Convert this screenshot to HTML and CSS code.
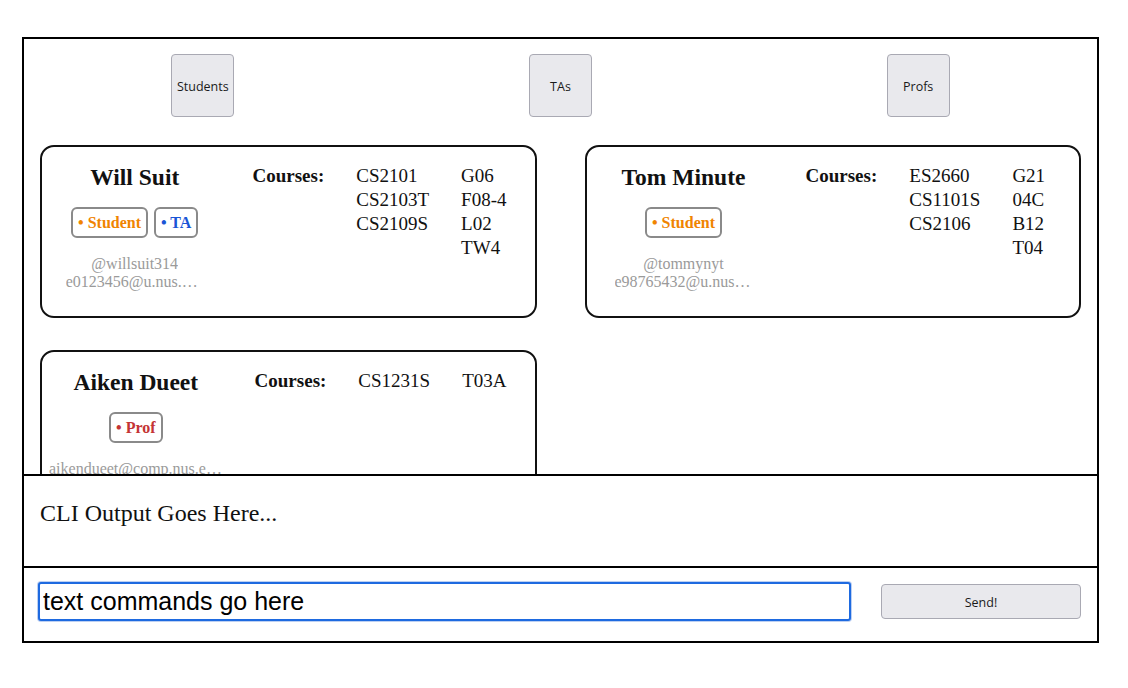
FILE: index.html
```html
<!DOCTYPE html>
<html lang="en">

<head>
    <meta charset="UTF-8">
    <meta name="viewport" content="width=device-width, initial-scale=1.0">
    <title>Contacts</title>
    <link rel="stylesheet" href="styles.css">
</head>

<body>
    <div class="app">
        <!-- filter buttons -->
        <div class="tabs">
            <div class="tab-cell"><button class="tab-btn">Students</button></div>
            <div class="tab-cell"><button class="tab-btn">TAs</button></div>
            <div class="tab-cell"><button class="tab-btn">Profs</button></div>
        </div>

        <!-- person cards -->
        <div class="card-list">
            <div class="card">
                <div class="person">
                    <div class="name">Will Suit</div>
                    <div class="badges">
                        <span class="badge badge-student">&bull; Student</span>
                        <span class="badge badge-ta">&bull; TA</span>
                    </div>
                    <div class="contact">
                        <div class="contact-line">@willsuit314</div>
                        <div class="contact-line">e0123456@u.nus.edu</div>
                    </div>
                </div>
                <div class="courses-label">Courses:</div>
                <div class="course-col">
                    <div>CS2101</div>
                    <div>CS2103T</div>
                    <div>CS2109S</div>
                </div>
                <div class="course-col">
                    <div>G06</div>
                    <div>F08-4</div>
                    <div>L02</div>
                    <div>TW4</div>
                </div>
            </div>

            <div class="card">
                <div class="person">
                    <div class="name">Tom Minute</div>
                    <div class="badges">
                        <span class="badge badge-student">&bull; Student</span>
                    </div>
                    <div class="contact">
                        <div class="contact-line">@tommynyt</div>
                        <div class="contact-line">e98765432@u.nus.edu</div>
                    </div>
                </div>
                <div class="courses-label">Courses:</div>
                <div class="course-col">
                    <div>ES2660</div>
                    <div>CS1101S</div>
                    <div>CS2106</div>
                </div>
                <div class="course-col">
                    <div>G21</div>
                    <div>04C</div>
                    <div>B12</div>
                    <div>T04</div>
                </div>
            </div>

            <div class="card">
                <div class="person">
                    <div class="name">Aiken Dueet</div>
                    <div class="badges">
                        <span class="badge badge-prof">&bull; Prof</span>
                    </div>
                    <div class="contact contact-solo">
                        <div class="contact-line">aikendueet@comp.nus.edu.sg</div>
                    </div>
                </div>
                <div class="courses-label">Courses:</div>
                <div class="course-col">
                    <div>CS1231S</div>
                </div>
                <div class="course-col">
                    <div>T03A</div>
                </div>
            </div>
        </div>

        <!-- cli output -->
        <div class="output">CLI Output Goes Here...</div>

        <!-- command box -->
        <div class="command">
            <input class="command-input" type="text" value="text commands go here" autofocus>
            <button class="send-btn">Send!</button>
        </div>
    </div>

    <script>
        const input = document.querySelector('.command-input');
        input.focus();
        input.setSelectionRange(input.value.length, input.value.length);
    </script>
</body>

</html>
```

FILE: styles.css
```css
/* page */
body {
    margin: 0;
    padding: 37px 0 0 22px;
    font-family: "Liberation Serif", "Times New Roman", serif;
    background-color: #fff;
    color: #111;
}

/* main frame */
.app {
    box-sizing: border-box;
    width: 1077px;
    height: 606px;
    border: 2px solid #000;
    display: flex;
    flex-direction: column;
}

/* top filter buttons */
.tabs {
    display: grid;
    grid-template-columns: 1fr 1fr 1fr;
    padding-top: 15px;
}

.tab-cell {
    display: flex;
    justify-content: center;
}

.tab-btn,
.send-btn {
    background-color: #e9e9ed;
    border: 1px solid #a9a9b3;
    border-radius: 4px;
    font-family: "Open Sans", "Liberation Sans", sans-serif;
    font-size: 12.5px;
    color: #1a1a1a;
    padding: 2px 0 0;
    cursor: pointer;
}

.tab-btn {
    width: 63px;
    height: 63px;
}

/* cards */
.card-list {
    flex: 1;
    min-height: 0;
    overflow: hidden;
    padding: 28px 16px 0;
    display: grid;
    grid-template-columns: minmax(0, 1fr) minmax(0, 1fr);
    grid-auto-rows: max-content;
    column-gap: 48px;
    row-gap: 32px;
}

.card {
    border: 2px solid #111;
    border-radius: 14px;
    display: flex;
    align-items: flex-start;
    gap: 32px;
    padding: 17px 28px 25px 7px;
}

.person {
    flex: 0 1 180px;
    min-width: 0;
    display: flex;
    flex-direction: column;
    align-items: center;
    text-align: center;
}

.name {
    font-size: 23.5px;
    font-weight: bold;
    line-height: 27px;
    white-space: nowrap;
}

.badges {
    display: flex;
    gap: 6px;
    margin-top: 16px;
}

.badge {
    box-sizing: border-box;
    height: 31px;
    line-height: 27px;
    padding: 0 5px;
    border: 2px solid #8a8a8a;
    border-radius: 6px;
    font-size: 16px;
    font-weight: bold;
    white-space: nowrap;
}

.badge-student {
    color: #f08400;
}

.badge-ta {
    color: #1a55d6;
}

.badge-prof {
    color: #c43434;
}

.contact {
    margin-top: 17px;
    width: 100%;
    display: flex;
    flex-direction: column;
    align-items: center;
    color: #9a9a9a;
    font-size: 16px;
    line-height: 18px;
}

.contact-line {
    max-width: 138px;
    overflow: hidden;
    white-space: nowrap;
    text-overflow: ellipsis;
}

.contact-solo .contact-line {
    max-width: 100%;
}

.courses-label {
    font-size: 19px;
    font-weight: bold;
    line-height: 24px;
    white-space: nowrap;
}

.course-col {
    font-size: 19px;
    line-height: 24px;
    white-space: nowrap;
}

/* cli output */
.output {
    box-sizing: border-box;
    height: 92px;
    border-top: 2px solid #000;
    padding: 24px 16px 0;
    font-size: 24px;
}

/* command row */
.command {
    flex: 0 0 auto;
    box-sizing: border-box;
    height: 75px;
    border-top: 2px solid #000;
    display: flex;
    align-items: center;
    gap: 30px;
    padding: 0 16px 6px 14px;
}

.command-input {
    box-sizing: border-box;
    width: 813px;
    height: 39px;
    padding: 0 3px;
    border: 2px solid #1e6ae0;
    border-radius: 3px;
    box-shadow: 0 0 0 1px #bdd0f2;
    outline: none;
    font-family: "Liberation Sans", Arial, sans-serif;
    font-size: 25px;
    color: #000;
    caret-color: #000;
}

.send-btn {
    width: 200px;
    height: 35px;
}
```
